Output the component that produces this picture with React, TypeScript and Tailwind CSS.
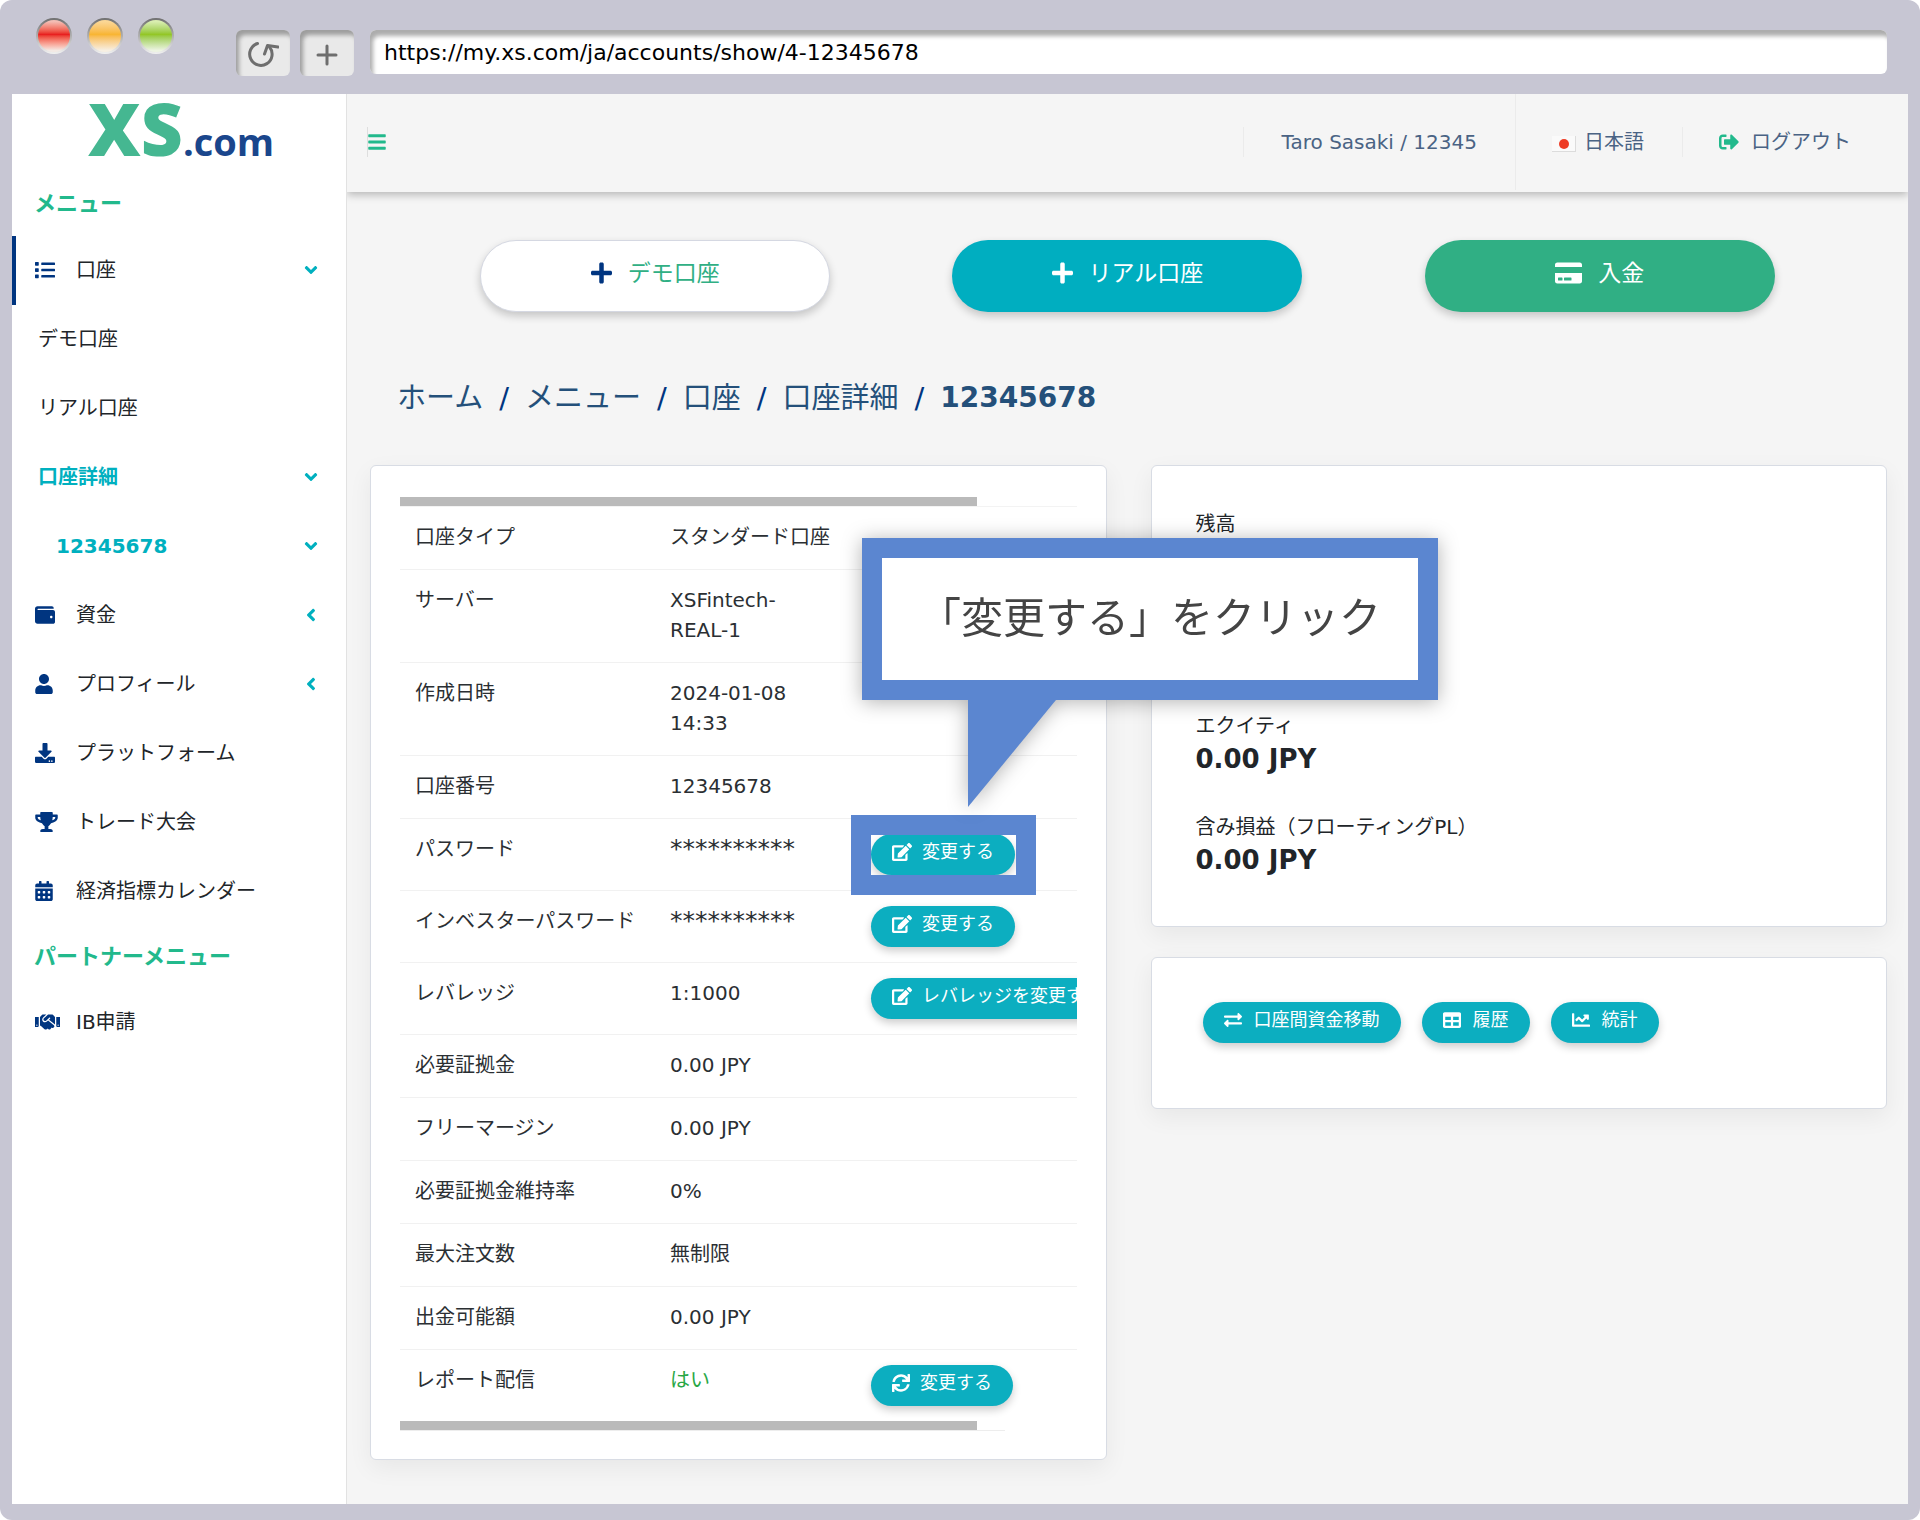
import type { ReactNode } from "react";
import type { IconType } from "react-icons";
import {
  FaAngleDown,
  FaAngleLeft,
  FaBars,
  FaCalendarAlt,
  FaChartLine,
  FaCreditCard,
  FaDownload,
  FaEdit,
  FaExchangeAlt,
  FaHandshake,
  FaList,
  FaPlus,
  FaSignOutAlt,
  FaSync,
  FaTable,
  FaTrophy,
  FaUser,
  FaWallet,
} from "react-icons/fa";

interface NavItem {
  label: string;
  icon?: IconType;
  iconClass?: string;
  arrow?: "down" | "left";
  active?: boolean;
  className?: string;
}

interface AccountRow {
  label: string;
  value: string;
  valueClass?: string;
  action?: { label: string; icon: IconType; iconClass?: string };
}

const menuItems: NavItem[] = [
  { label: "口座", icon: FaList, arrow: "down", active: true },
  { label: "デモ口座", className: "pl-[22px]" },
  { label: "リアル口座", className: "pl-[22px]" },
  { label: "口座詳細", arrow: "down", className: "pl-[22px] font-bold text-[#00b0bf]" },
  { label: "12345678", arrow: "down", className: "pl-[40px] font-bold text-[#00b0bf]" },
  { label: "資金", icon: FaWallet, arrow: "left" },
  { label: "プロフィール", icon: FaUser, iconClass: "w-[18px]", arrow: "left" },
  { label: "プラットフォーム", icon: FaDownload },
  { label: "トレード大会", icon: FaTrophy, iconClass: "w-[23px]" },
  { label: "経済指標カレンダー", icon: FaCalendarAlt, iconClass: "w-[18px]" },
];

const partnerItems: NavItem[] = [{ label: "IB申請", icon: FaHandshake, iconClass: "w-[25px]" }];

const stars = "**********";

const rows: AccountRow[] = [
  { label: "口座タイプ", value: "スタンダード口座" },
  { label: "サーバー", value: "XSFintech-REAL-1" },
  { label: "作成日時", value: "2024-01-08 14:33" },
  { label: "口座番号", value: "12345678" },
  { label: "パスワード", value: stars, valueClass: "text-[25px]", action: { label: "変更する", icon: FaEdit, iconClass: "w-5" } },
  { label: "インベスターパスワード", value: stars, valueClass: "text-[25px]", action: { label: "変更する", icon: FaEdit, iconClass: "w-5" } },
  { label: "レバレッジ", value: "1:1000", action: { label: "レバレッジを変更する", icon: FaEdit, iconClass: "w-5" } },
  { label: "必要証拠金", value: "0.00 JPY" },
  { label: "フリーマージン", value: "0.00 JPY" },
  { label: "必要証拠金維持率", value: "0%" },
  { label: "最大注文数", value: "無制限" },
  { label: "出金可能額", value: "0.00 JPY" },
  { label: "レポート配信", value: "はい", valueClass: "text-[#28a745]", action: { label: "変更する", icon: FaSync } },
];

const crumbs = ["ホーム", "メニュー", "口座", "口座詳細"];

function WindowDot({ className }: { className: string }) {
  return (
    <span className="size-9 rounded-full bg-gradient-to-b from-[#6f6f6f] to-[#f2f2f2] p-[2px]">
      <span className={`block size-full rounded-full bg-gradient-to-b ${className}`} />
    </span>
  );
}

function ChromeButton({ label, children }: { label: string; children: ReactNode }) {
  return (
    <button
      aria-label={label}
      className="flex h-[46px] w-[54px] items-center justify-center rounded-md bg-[#e9e9e9] text-[#6e6e6e] shadow-[inset_3px_5px_4px_#9d9d9d]"
    >
      {children}
    </button>
  );
}

function BrowserBar() {
  return (
    <div className="flex h-[94px] items-start pr-[21px] pl-6">
      <div className="flex gap-[15px] pt-[18px]">
        <WindowDot className="from-[#f3bdb4] from-5% via-[#e81c1e] via-45% to-[#f3e9e4] to-95%" />
        <WindowDot className="from-[#fbd795] from-5% via-[#f8b531] via-45% to-[#f7efe2] to-95%" />
        <WindowDot className="from-[#d9eeb0] from-5% via-[#93c623] via-45% to-[#edf4e2] to-95%" />
      </div>
      <div className="ml-[62px] flex gap-[10px] pt-[30px]">
        <ChromeButton label="再読み込み">
          <svg className="mt-1 size-8" viewBox="0 0 32 32" fill="none" stroke="currentColor" strokeWidth="3" strokeLinecap="round" strokeLinejoin="round">
            <path d="M10.500 4.500A11.200 11.200 0 1 0 22.500 8" />
            <path d="M17.500 15L20.500 6.500L31 8" />
          </svg>
        </ChromeButton>
        <ChromeButton label="新しいタブ">
          <svg className="mt-1 size-6" viewBox="0 0 24 24" stroke="currentColor" strokeWidth="3" strokeLinecap="round">
            <path d="M12 3V21M3 12H21" />
          </svg>
        </ChromeButton>
      </div>
      <div className="ml-4 flex-1 pt-[30px]">
        <input
          aria-label="アドレス"
          readOnly
          value="https://my.xs.com/ja/accounts/show/4-12345678"
          className="block h-[44px] w-full rounded-md bg-white pl-[14px] text-[22px] text-black shadow-[inset_3px_6px_4px_#adadad] outline-none"
        />
      </div>
    </div>
  );
}

function NavLink({ item }: { item: NavItem }) {
  const Icon = item.icon;
  return (
    <li>
      <a
        href="#"
        className={`flex h-[69px] items-center border-l-4 pr-[25px] pb-0.5 ${item.active ? "border-[#003580]" : "border-transparent"} ${item.className ?? "pl-[19px]"}`}
      >
        {Icon && (
          <span className="w-[41px] text-[#003580]">
            <Icon className={`h-5 ${item.iconClass ?? "w-5"}`} />
          </span>
        )}
        <span className="flex-1">{item.label}</span>
        {item.arrow === "down" && <FaAngleDown className="size-5 text-[#00b0bf]" />}
        {item.arrow === "left" && <FaAngleLeft className="size-5 text-[#00b0bf]" />}
      </a>
    </li>
  );
}

function Sidebar() {
  return (
    <aside className="w-[335px] shrink-0 border-r border-[#e2e2e2] bg-white text-[#212529]">
      <a href="#" className="flex h-[78px] items-baseline pl-[76px] font-['Open_Sans',sans-serif]">
        <span className="text-[73px] leading-[68px] font-extrabold text-[#45b791]">XS</span>
        <span className="text-[38px] font-bold text-[#1a468c]">.com</span>
      </a>
      <h2 className="flex h-[64px] items-center pl-[22px] text-[22px] font-bold text-[#22b98c]">メニュー</h2>
      <ul>
        {menuItems.map((item) => (
          <NavLink key={item.label} item={item} />
        ))}
      </ul>
      <h2 className="flex h-[62px] items-center pl-[22px] text-[22px] font-bold text-[#22b98c]">パートナーメニュー</h2>
      <ul>
        {partnerItems.map((item) => (
          <NavLink key={item.label} item={item} />
        ))}
      </ul>
    </aside>
  );
}

function Header() {
  return (
    <header className="relative flex h-[98px] items-center bg-[#f5f5f5] pb-0.5 pl-5 text-[#4a6384] shadow-[0_3px_8px_rgba(0,0,0,0.25)]">
      <button aria-label="メニュー切替" className="flex h-[30px] items-center border-l border-[#dedede] text-[#22b98c]">
        <FaBars className="h-5 w-[18px]" />
      </button>
      <div className="ml-auto flex h-full items-center">
        <span className="flex h-[30px] items-center border-l border-[#ebebeb] px-[38px]">Taro Sasaki / 12345</span>
        <button className="flex h-full items-center gap-2 border-l border-[#ebebeb] pr-[38px] pl-[36px]">
          <svg className="mt-1 h-4 w-6" viewBox="0 0 24 16">
            <rect width="24" height="16" fill="#dcdcdc" />
            <rect width="23" height="15" fill="#fafafa" />
            <circle cx="12" cy="8" r="5" fill="#ee3b24" />
          </svg>
          日本語
        </button>
        <a href="#" className="flex h-[30px] items-center gap-3 border-l border-[#ebebeb] pr-[57px] pl-[36px]">
          <FaSignOutAlt className="size-5 text-[#22b98c]" />
          ログアウト
        </a>
      </div>
    </header>
  );
}

function BigButton({ icon: Icon, label, className, iconClass }: { icon: IconType; label: string; className: string; iconClass: string }) {
  return (
    <button
      className={`flex h-[72px] w-[350px] items-center justify-center gap-4 rounded-full pb-1.5 text-[23px] shadow-[0_4px_8px_rgba(0,0,0,0.2)] ${className}`}
    >
      <Icon className={`h-6 ${iconClass}`} />
      {label}
    </button>
  );
}

interface PillButtonProps {
  icon: IconType;
  label: string;
  iconClass?: string;
  gap?: string;
}

function PillButton({ icon: Icon, label, iconClass = "w-[18px]", gap = "gap-[10px]" }: PillButtonProps) {
  return (
    <button
      className={`flex h-[41px] items-center rounded-full bg-[#0caec0] px-[21px] pb-1.5 text-lg whitespace-nowrap text-white shadow-[0_4px_8px_rgba(0,0,0,0.2)] ${gap}`}
    >
      <Icon className={`h-[18px] ${iconClass}`} />
      {label}
    </button>
  );
}

function Card({ className = "", children }: { className?: string; children: ReactNode }) {
  return (
    <section className={`rounded-md border border-[#d8dce4] bg-white shadow-[0_8px_24px_rgba(0,0,0,0.06)] ${className}`}>
      {children}
    </section>
  );
}

function AccountTable() {
  return (
    <div className="overflow-hidden">
      <div className="border-b border-[#f3f3f3]">
        <div className="h-[9px] w-[577px] bg-[#bababa]" />
      </div>
      <table className="w-full table-fixed text-left text-[#2b2f33]">
        <tbody>
          {rows.map((row) => (
            <tr key={row.label} className="border-b border-[#f1f1f1] align-top leading-[30px] last:border-0">
              <th scope="row" className="w-[255px] pt-[15px] pl-[15px] font-normal whitespace-nowrap">
                {row.label}
              </th>
              <td className={`w-[201px] pt-[15px] pr-6 pb-[17px] pl-[15px] ${row.valueClass ?? ""}`}>{row.value}</td>
              <td className="pl-[15px]">
                {row.action && (
                  <div className="py-[15px]">
                    <PillButton icon={row.action.icon} label={row.action.label} iconClass={row.action.iconClass} />
                  </div>
                )}
              </td>
            </tr>
          ))}
        </tbody>
      </table>
      <div className="w-[605px] border-b border-[#ededed]">
        <div className="h-[9px] w-[577px] bg-[#bababa]" />
      </div>
    </div>
  );
}

// Blue callout with its tail, and the frame round the password button
function ClickHint() {
  return (
    <>
      <div className="absolute top-[72px] left-[491px] z-20 drop-shadow-[0_2px_10px_rgba(0,0,0,0.3)]">
        <div className="flex h-[162px] w-[576px] items-center justify-center border-20 border-[#5b86d0] bg-white text-[42px] whitespace-nowrap text-[#444]">
          「変更する」をクリック
        </div>
        <svg className="ml-[106px] block h-[107px] w-[88px]" viewBox="0 0 88 107">
          <path d="M0 0H88L0 107Z" fill="#5b86d0" />
        </svg>
      </div>
      <div className="pointer-events-none absolute top-[349px] left-[480px] z-10 h-[80px] w-[185px] border-20 border-[#5b86d0]" />
    </>
  );
}

export default function App() {
  return (
    <div className="min-h-screen bg-white font-['DejaVu_Sans','Noto_Sans_CJK_JP',sans-serif] text-xl">
      <div className="flex min-h-screen flex-col rounded-xl bg-[#c7c6d3] px-3 pb-4">
        <BrowserBar />
        <div className="flex flex-1 bg-[#f5f5f5]">
          <Sidebar />
          <div className="min-w-0 flex-1 overflow-clip">
            <Header />
            <main className="pt-12 pb-10">
              <div className="grid grid-cols-3 justify-items-center px-[72px]">
                <BigButton icon={FaPlus} label="デモ口座" className="border border-[#d5d8e2] bg-white text-[#30af84]" iconClass="w-[21px] text-[#003580]" />
                <BigButton icon={FaPlus} label="リアル口座" className="bg-[#00aec0] text-white" iconClass="w-[21px]" />
                <BigButton icon={FaCreditCard} label="入金" className="bg-[#30af84] text-white" iconClass="w-[27px]" />
              </div>

              <nav className="mt-16 pl-[50px]">
                <ol className="flex h-11 items-center gap-4 text-[29px] text-[#24507a]">
                  {crumbs.map((crumb) => (
                    <li key={crumb} className="flex items-center gap-4">
                      <a href="#">{crumb}</a>
                      <span className="text-[#003580]">/</span>
                    </li>
                  ))}
                  <li className="text-[28px] font-bold">12345678</li>
                </ol>
              </nav>

              <div className="mt-[45px] grid grid-cols-2 items-start gap-11 pr-[21px] pl-[23px]">
                <Card className="relative px-[29px] pt-[31px] pb-[28px]">
                  <AccountTable />
                  <ClickHint />
                </Card>
                <div className="flex flex-col gap-[30px]">
                  <Card className="px-11 pt-[43px] pb-12 text-[#212529]">
                    <dl className="flex flex-col gap-[35px]">
                      <div className="h-[167px]">
                        <dt className="leading-[30px]">残高</dt>
                      </div>
                      <div>
                        <dt className="leading-[30px]">エクイティ</dt>
                        <dd className="text-[26px] leading-9 font-bold">0.00 JPY</dd>
                      </div>
                      <div>
                        <dt className="leading-[30px]">含み損益（フローティングPL）</dt>
                        <dd className="text-[26px] leading-9 font-bold">0.00 JPY</dd>
                      </div>
                    </dl>
                  </Card>
                  <Card className="flex gap-[21px] px-[51px] pt-11 pb-[65px]">
                    <PillButton icon={FaExchangeAlt} label="口座間資金移動" gap="gap-3" />
                    <PillButton icon={FaTable} label="履歴" gap="gap-3" />
                    <PillButton icon={FaChartLine} label="統計" gap="gap-3" />
                  </Card>
                </div>
              </div>
            </main>
          </div>
        </div>
      </div>
    </div>
  );
}
